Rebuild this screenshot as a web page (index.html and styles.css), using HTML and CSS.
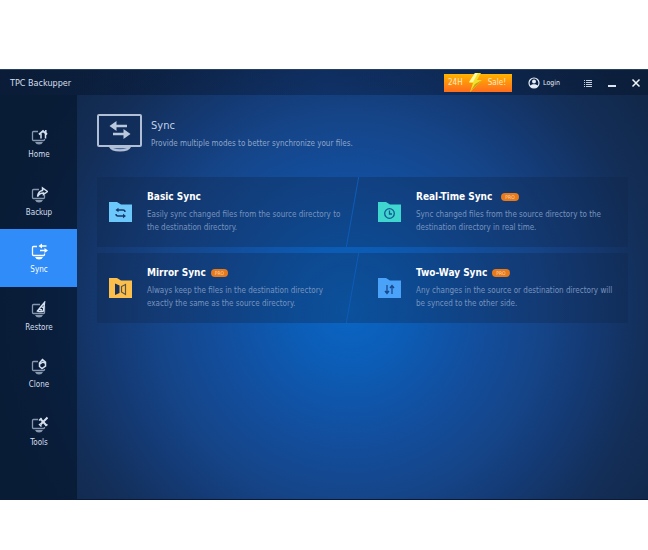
FILE: index.html
```html
<!DOCTYPE html>
<html lang="en">
<head>
    <meta charset="UTF-8">
    <title>TPC Backupper</title>
    <link rel="stylesheet" href="styles.css">
</head>
<body>
    <div class="window">
        <header class="titlebar">
            <h1 class="app-name">TPC Backupper</h1>
            <button class="sale" type="button">
                <span>24H</span>
                <svg class="bolt" viewBox="0 0 16 20">
                    <path d="M8 0h6l-4 7h5L3 19l3-9H2z" fill="#f4e02c"/>
                    <path d="M8 0h3L6 9H2z" fill="#fff9a0"/>
                    <path d="M15 7L3 19l5-8z" fill="#c9a414"/>
                </svg>
                <span>Sale!</span>
            </button>
            <button class="login" type="button">
                <svg viewBox="0 0 12 12">
                    <circle cx="6" cy="6" r="5" fill="none" stroke="#e6edf7" stroke-width="1.2"/>
                    <circle cx="6" cy="4.600" r="2" fill="#e6edf7"/>
                    <path d="M2 9c1-2.400 7-2.400 8 0-2 2.500-6 2.500-8 0z" fill="#e6edf7"/>
                </svg>
                Login
            </button>
            <div class="window-buttons">
                <button type="button" aria-label="Menu">
                    <svg viewBox="0 0 10 10"><path d="M1 2.500h1M3 2.500h6M1 4.500h1M3 4.500h6M1 6.500h1M3 6.500h6M1 8.500h1M3 8.500h6" stroke="#c3cfdf" stroke-width="1"/></svg>
                </button>
                <button type="button" aria-label="Minimize">
                    <svg viewBox="0 0 10 10"><path d="M1 8h8" stroke="#dbe4f0" stroke-width="2"/></svg>
                </button>
                <button type="button" aria-label="Close">
                    <svg viewBox="0 0 10 10"><path d="M1.500 1.500l7 7M8.500 1.500l-7 7" stroke="#f2f6fb" stroke-width="1.500"/></svg>
                </button>
            </div>
        </header>

        <div class="body">
            <nav class="sidebar">
                <a class="nav-item" href="#home">
                    <svg class="nav-icon" viewBox="0 0 18 18">
                        <path class="screen" d="M8 3.500H3.500a1 1 0 0 0-1 1v7a1 1 0 0 0 1 1h10a1 1 0 0 0 1-1V11"/>
                        <path class="stand" d="M5 14h8q-1 2.500-4 2.500t-4-2.500z"/>
                        <path class="mark wide" d="M9 6.500L13 3l4 3.500"/>
                        <path class="mark" d="M11 6v4.500M15.500 6v4.500M15.800 2v3"/>
                    </svg>
                    Home
                </a>
                <a class="nav-item" href="#backup">
                    <svg class="nav-icon" viewBox="0 0 18 18">
                        <path class="screen" d="M9 3.500H3.500a1 1 0 0 0-1 1v7a1 1 0 0 0 1 1h10a1 1 0 0 0 1-1V9"/>
                        <path class="stand" d="M5 14h8q-1 2.500-4 2.500t-4-2.500z"/>
                        <path class="mark" d="M7.500 10.500C8 7 9.500 5 12.500 4.500V2l5 3.500-4 3V7C11 7 9 8 7.500 10.500z"/>
                    </svg>
                    Backup
                </a>
                <a class="nav-item active" href="#sync" aria-current="page">
                    <svg class="nav-icon" viewBox="0 0 18 18">
                        <path class="screen" d="M7 3.500H3.500a1 1 0 0 0-1 1v7a1 1 0 0 0 1 1h10a1 1 0 0 0 1-1V10.500"/>
                        <path class="stand" d="M5 14h8q-1 2.500-4 2.500t-4-2.500z"/>
                        <path class="mark" d="M10 3h6.500M10 7.500h6"/>
                        <path class="solid" d="M8.500 3L12 .500v5zM18 7.500L14.500 5v5z"/>
                    </svg>
                    Sync
                </a>
                <a class="nav-item" href="#restore">
                    <svg class="nav-icon" viewBox="0 0 18 18">
                        <path class="screen" d="M10 3.500H3.500a1 1 0 0 0-1 1v7a1 1 0 0 0 1 1h10a1 1 0 0 0 1-1V5"/>
                        <path class="stand" d="M5 14h8q-1 2.500-4 2.500t-4-2.500z"/>
                        <path class="mark" d="M14.500 1.500l-3 3.500-4 5c2 .800 4 .800 6 0zM11 5l2.500 2M9 8l3 1"/>
                    </svg>
                    Restore
                </a>
                <a class="nav-item" href="#clone">
                    <svg class="nav-icon" viewBox="0 0 18 18">
                        <path class="screen" d="M8 3.500H3.500a1 1 0 0 0-1 1v7a1 1 0 0 0 1 1h10a1 1 0 0 0 1-1V11"/>
                        <path class="stand" d="M5 14h8q-1 2.500-4 2.500t-4-2.500z"/>
                        <path class="mark" d="M12.500 1.500L9.500 5v3.500l2.500 2L15.500 8V4zM10 6l3-2 2 1"/>
                    </svg>
                    Clone
                </a>
                <a class="nav-item" href="#tools">
                    <svg class="nav-icon" viewBox="0 0 18 18">
                        <path class="screen" d="M8 3.500H3.500a1 1 0 0 0-1 1v7a1 1 0 0 0 1 1h10a1 1 0 0 0 1-1V11"/>
                        <path class="stand" d="M5 14h8q-1 2.500-4 2.500t-4-2.500z"/>
                        <path class="mark wide" d="M10.500 3l6 6.500M17.500 1.500L10.500 8.500"/>
                        <path class="mark" d="M9 4.500l2.500-2.500M9 8l2.500 2.500M15.500 10l2-1.500"/>
                    </svg>
                    Tools
                </a>
            </nav>

            <main class="content">
                <section class="intro">
                    <svg class="intro-icon" viewBox="0 0 46 38">
                        <rect x="1" y="1" width="43" height="31" rx="1" fill="#102c56" fill-opacity=".6" stroke="#b1bfd6" stroke-width="2"/>
                        <path d="M17 12h13M16 20h13" stroke="#b9c7dd" stroke-width="2.600"/>
                        <path d="M12.500 12l7-5v10zM33.500 20l-7-5v10z" fill="#b9c7dd"/>
                        <path d="M12 33h22q-2 4.500-11 4.500T12 33z" fill="#b1bfd6"/>
                        <path d="M16 34h14q-7 2.500-14 0z" fill="#4b6a9c"/>
                    </svg>
                    <div>
                        <h2 class="intro-title">Sync</h2>
                        <p class="intro-text">Provide multiple modes to better synchronize your files.</p>
                    </div>
                </section>

                <section class="modes">
                    <div class="row">
                        <a class="mode" href="#basic">
                            <svg class="folder" viewBox="0 0 23 20">
                                <path d="M0 0h8l4 2.500h11V20H0z" fill="#6cc8fb"/>
                                <path d="M9 8h5q2 0 2 2M14.500 14H9q-2 0-2-2" fill="none" stroke="#17366a" stroke-width="1.400"/>
                                <path d="M6.500 8L9.500 5.800v4.400zM17 14l-3-2.200v4.400z" fill="#17366a"/>
                            </svg>
                            <div class="mode-info">
                                <h3 class="mode-title">Basic Sync</h3>
                                <p class="mode-text">Easily sync changed files from the source directory to the destination directory.</p>
                            </div>
                        </a>
                        <a class="mode" href="#realtime">
                            <svg class="folder" viewBox="0 0 23 20">
                                <path d="M0 0h8l4 2.500h11V20H0z" fill="#3fd6cf"/>
                                <circle cx="11.500" cy="11.500" r="4.800" fill="none" stroke="#145892" stroke-width="1.300"/>
                                <path d="M11.500 8.500V12H14" fill="none" stroke="#145892" stroke-width="1.300"/>
                            </svg>
                            <div class="mode-info">
                                <h3 class="mode-title spaced">Real-Time Sync <span class="pro">PRO</span></h3>
                                <p class="mode-text">Sync changed files from the source directory to the destination directory in real time.</p>
                            </div>
                        </a>
                    </div>
                    <div class="row">
                        <a class="mode" href="#mirror">
                            <svg class="folder" viewBox="0 0 23 20">
                                <path d="M0 0h8l4 2.500h11V20H0z" fill="#fdbf4b"/>
                                <path d="M6 5.500l4.500 2v7.500L6 17z" fill="#17305c"/>
                                <path d="M16.500 6.500l-4 2v5.500l4 2.500z" fill="none" stroke="#5a5448" stroke-width="1.200"/>
                            </svg>
                            <div class="mode-info">
                                <h3 class="mode-title">Mirror Sync <span class="pro">PRO</span></h3>
                                <p class="mode-text">Always keep the files in the destination directory exactly the same as the source directory.</p>
                            </div>
                        </a>
                        <a class="mode" href="#twoway">
                            <svg class="folder" viewBox="0 0 23 20">
                                <path d="M0 0h8l4 2.500h11V20H0z" fill="#4aa3f8"/>
                                <path d="M9 7v8M14 8v8M7 13l2 2.500 2-2.500M12 10l2-2.500 2 2.500" fill="none" stroke="#17478c" stroke-width="1.300"/>
                            </svg>
                            <div class="mode-info">
                                <h3 class="mode-title">Two-Way Sync <span class="pro">PRO</span></h3>
                                <p class="mode-text">Any changes in the source or destination directory will be synced to the other side.</p>
                            </div>
                        </a>
                    </div>
                </section>
            </main>
        </div>
    </div>
</body>
</html>
```
FILE: styles.css
```css
* {
    box-sizing: border-box;
}

body {
    margin: 0;
    min-height: 100vh;
    padding: 69px 0 50px;
    display: flex;
    flex-direction: column;
    background-color: #fff;
    font-family: "DejaVu Sans Condensed", "Noto Sans", sans-serif;
    font-size: 8px;
}

h1, h2, h3, p {
    margin: 0;
    font-weight: normal;
}

a {
    color: inherit;
    text-decoration: none;
}

button {
    padding: 0;
    border: 0;
    background: none;
    color: inherit;
    font: inherit;
    cursor: pointer;
}

svg {
    display: block;
    flex: none;
}

.window {
    flex: 1;
    display: flex;
    flex-direction: column;
    color: #d5dfed;
    border-top: 1px solid #24405c;
    border-bottom: 1px solid #0a1a38;
    background: radial-gradient(circle at 54% 56%, #0a66c4 0, #0c5cb5 60px, #124f9f 125px, #154589 190px, #143a74 240px, #132e58 300px, #11284a 360px);
}

/* title bar */
.titlebar {
    display: flex;
    align-items: center;
    height: 25px;
    padding: 0 7px 0 10px;
    background: linear-gradient(90deg, rgba(5, 20, 42, 0.6), rgba(8, 28, 66, 0.4) 50%, rgba(5, 20, 42, 0.5));
}

.app-name {
    flex: 1;
    font-size: 9px;
}

.sale {
    display: flex;
    align-items: center;
    justify-content: space-between;
    width: 68px;
    height: 18px;
    padding: 0 6px 0 4px;
    background: linear-gradient(#ffb400, #ff6c1c);
    color: #ffe9c4;
}

.bolt {
    width: 16px;
    height: 20px;
}

.login {
    display: flex;
    align-items: center;
    gap: 3px;
    margin-left: 16px;
    font-size: 7px;
    color: #e6edf7;
}

.login svg {
    width: 12px;
    height: 12px;
}

.window-buttons {
    display: flex;
    gap: 14px;
    margin-left: 23px;
}

.window-buttons svg {
    width: 10px;
    height: 10px;
}

.body {
    flex: 1;
    display: flex;
}

/* sidebar */
.sidebar {
    width: 77px;
    padding: 19px 0 40px;
    display: flex;
    flex-direction: column;
    background-color: rgba(4, 20, 42, 0.6);
}

.nav-item {
    flex: 1;
    display: flex;
    flex-direction: column;
    align-items: center;
    justify-content: center;
    gap: 4px;
    padding: 3px 0 0 1px;
    line-height: 10px;
}

.nav-item.active {
    background-color: #2f8cf8;
    color: #fff;
}

.nav-icon {
    width: 18px;
    height: 18px;
}

.nav-icon path {
    fill: none;
    stroke: #d5dfed;
}

.nav-icon .screen {
    stroke: #8797ae;
    stroke-width: 1.3;
}

.nav-icon .stand {
    fill: #8797ae;
    stroke: none;
}

.nav-icon .mark {
    stroke-width: 1.5;
}

.nav-icon .wide {
    stroke-width: 2;
}

.nav-icon .solid {
    fill: #fff;
    stroke: none;
}

.active .nav-icon .screen,
.active .nav-icon .mark {
    stroke: #fff;
}

.active .nav-icon .stand {
    fill: #fff;
}

/* content */
.content {
    flex: 1;
    padding: 19px 20px 20px;
}

.intro {
    display: flex;
    gap: 8px;
    height: 63px;
}

.intro-icon {
    width: 46px;
    height: 38px;
}

.intro-title {
    padding-top: 5px;
    font-size: 11px;
    line-height: 14px;
    color: #c3d1e6;
}

.intro-text {
    padding-top: 5px;
    line-height: 12px;
    color: #8fa5c8;
}

.modes {
    display: flex;
    flex-direction: column;
    gap: 6px;
}

.row {
    display: grid;
    grid-template-columns: 269fr 262fr;
    height: 70px;
    background-color: rgba(14, 36, 72, 0.32);
}

.mode {
    position: relative;
    display: flex;
    align-items: center;
    gap: 15px;
    padding: 0 12px;
}

/* slanted divider between the two modes */
.mode + .mode::before {
    content: "";
    position: absolute;
    top: 0;
    bottom: 0;
    left: -14px;
    width: 1px;
    background-color: #0f5cb8;
    transform: skewX(-10deg);
}

.folder {
    width: 23px;
    height: 20px;
}

/* narrow enough to keep clear of the divider */
.mode-info {
    max-width: 200px;
}

.mode-title {
    display: flex;
    align-items: center;
    gap: 5px;
    padding-bottom: 5px;
    font-size: 10px;
    line-height: 12px;
    font-weight: bold;
    color: #fff;
}

.mode-title.spaced {
    gap: 9px;
}

.mode-text {
    line-height: 13px;
    color: #7793be;
}

.pro {
    padding: 0 4px;
    border-radius: 4px;
    background-color: #e67a1c;
    color: #ffd9ac;
    font-size: 5px;
    line-height: 8px;
    font-weight: normal;
}
```
